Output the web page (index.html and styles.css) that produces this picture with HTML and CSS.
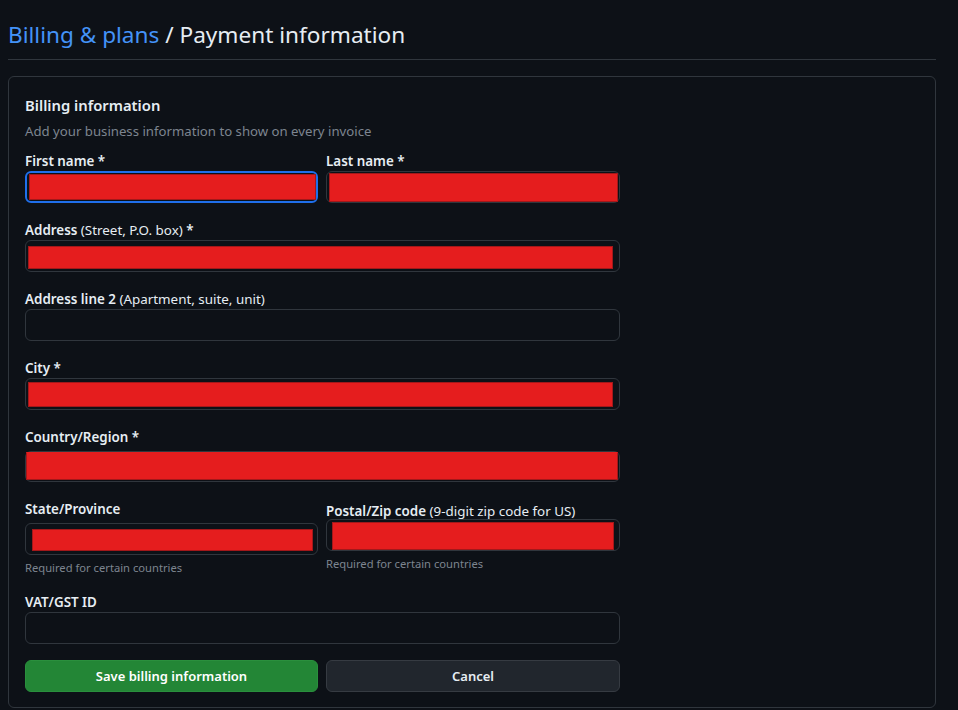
FILE: index.html
```html
<!DOCTYPE html>
<html lang="en">
<head>
<meta charset="utf-8">
<title>Payment information</title>
<link rel="stylesheet" href="styles.css">
</head>
<body>
<div class="page">
  <header class="subhead">
    <h1 class="subhead-title"><a href="#" class="crumb">Billing &amp; plans</a> / Payment information</h1>
  </header>
  <section class="box">
    <h2 class="box-title">Billing information</h2>
    <p class="box-desc">Add your business information to show on every invoice</p>
    <form class="form">
      <div class="row">
        <div class="field">
          <label class="label">First name *</label>
          <div class="input focused"><span class="redact r-first"></span></div>
        </div>
        <div class="field">
          <label class="label">Last name *</label>
          <div class="input"><span class="redact r-last"></span></div>
        </div>
      </div>
      <div class="field">
        <label class="label">Address <span class="note">(Street, P.O. box)</span> *</label>
        <div class="input"><span class="redact r-wide"></span></div>
      </div>
      <div class="field">
        <label class="label">Address line 2 <span class="note">(Apartment, suite, unit)</span></label>
        <div class="input"></div>
      </div>
      <div class="field">
        <label class="label">City *</label>
        <div class="input"><span class="redact r-wide r-city"></span></div>
      </div>
      <div class="field">
        <label class="label">Country/Region *</label>
        <div class="input select"><span class="redact r-country"></span></div>
      </div>
      <div class="row">
        <div class="field">
          <label class="label">State/Province</label>
          <div class="input state"><span class="redact r-state"></span></div>
          <p class="hint hint-state">Required for certain countries</p>
        </div>
        <div class="field postal">
          <label class="label">Postal/Zip code <span class="note">(9-digit zip code for US)</span></label>
          <div class="input"><span class="redact r-postal"></span></div>
          <p class="hint">Required for certain countries</p>
        </div>
      </div>
      <div class="field vat">
        <label class="label">VAT/GST ID</label>
        <div class="input"></div>
      </div>
      <div class="row actions">
        <button type="button" class="btn btn-primary">Save billing information</button>
        <button type="button" class="btn">Cancel</button>
      </div>
    </form>
  </section>
</div>
</body>
</html>
```

FILE: styles.css
```css
* { box-sizing: border-box; }
html, body { margin: 0; padding: 0; background: #0d1117; }
body {
  font-family: "Noto Sans", "Open Sans", sans-serif;
  color: #e6edf3;
  font-size: 13.2px;
  line-height: 1.5;
  height: 710px;
  overflow: hidden;
}
.page {
  width: 928px;
  margin-left: 8px;
}
.subhead {
  border-bottom: 1px solid #30363d;
  padding: 18px 0 7px;
  margin-bottom: 16px;
}
.subhead-title {
  margin: 0;
  font-size: 22.6px;
  font-weight: 400;
  line-height: 34px;
  color: #e6edf3;
}
.crumb { color: #4493f8; text-decoration: none; }
.box {
  border: 1px solid #30363d;
  border-radius: 6px;
  padding: 16px;
  height: 632px;
}
.box-title {
  margin: 0;
  font-size: 14.8px;
  font-weight: 600;
  line-height: 24px;
}
.box-desc {
  margin: 4px 0 8px;
  color: #7d8590;
  font-size: 13.2px;
  line-height: 21px;
}
.form {
  width: 595px;
  display: flex;
  flex-direction: column;
  gap: 16px;
}
.row {
  display: grid;
  grid-template-columns: 293px 294px;
  gap: 8px;
  align-items: start;
}
.field { display: flex; flex-direction: column; }
.label {
  font-size: 13.4px;
  font-weight: 600;
  line-height: 20px;
  padding-top: 1px;
}
.note { font-weight: 400; }
.input {
  height: 32px;
  border: 1px solid #30363d;
  border-radius: 6px;
  background: #0d1117;
  display: flex;
}
.input.focused {
  border: 2px solid #1f6feb;
}
.input.select { margin-top: 4px; height: 31px; }
.input.state { margin-top: 4px; }
.postal { margin-top: 2px; }
.postal .input { margin-top: -2px; }
.redact {
  display: block;
  background: #e51d1e;
  border: 1px solid #a3181a;
}
.r-first { margin: 1px 0 1px 2px; width: 287px; }
.r-last { margin: 1px 1px 0 2px; width: 290px; }
.r-wide { margin: 5px 0 2px 2px; width: 585px; }
.r-city { margin: 3px 0 2px 2px; }
.r-country { margin: 0 1px 1px 0; flex: 1; border-top-color: #e51d1e; }
.r-state { margin: 5px 0 3px 6px; width: 281px; }
.r-postal { margin: 2px 0 0 5px; width: 282px; }
.hint {
  margin: 4px 0 0;
  font-size: 11.2px;
  line-height: 18px;
  color: #7d8590;
}
.hint-state { margin-top: 4px; }
.vat { margin-top: -2px; }
.btn {
  height: 32px;
  border: 1px solid #363b42;
  border-radius: 6px;
  background: #21262d;
  color: #e6edf3;
  font-family: inherit;
  font-size: 13px;
  font-weight: 600;
  padding-bottom: 2px;
}
.btn-primary {
  background: #238636;
  border-color: #2a8f3d;
  color: #ffffff;
}
```
